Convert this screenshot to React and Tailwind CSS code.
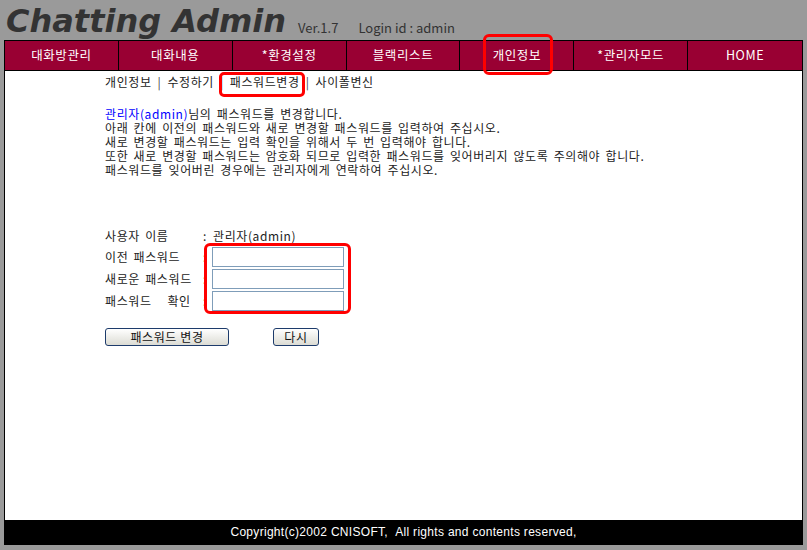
const MENU = ["대화방관리", "대화내용", "*환경설정", "블랙리스트", "개인정보", "*관리자모드", "HOME"];

const FIELDS = ["이전 패스워드", "새로운 패스워드", "패스워드   확인"];

function Button({ children, className }) {
  return (
    <button
      className={
        "h-[18px] rounded-[3px] border border-[#1d3b6b] bg-gradient-to-b from-white to-[#dcdcd4] text-[12px] leading-none tracking-[0.6px] text-[#111] " +
        className
      }
    >
      {children}
    </button>
  );
}

export default function App() {
  return (
    <div
      className="relative w-[807px] h-[550px] bg-[#9a9a9a] text-[12px] text-[#222]"
      style={{ fontFamily: '"Noto Sans CJK KR", "Noto Sans", sans-serif' }}
    >
      <div className="flex h-[40px] items-end pl-[6px]">
        <h1
          className="text-[32px] font-bold italic leading-none text-[#333] pb-[3px]"
          style={{ fontFamily: '"DejaVu Sans", Verdana, sans-serif' }}
        >
          Chatting Admin
        </h1>
        <span className="ml-[12px] pb-[3px] text-[13px] text-[#333]">Ver.1.7</span>
        <span className="ml-[20px] pb-[3px] text-[13px] text-[#333]">Login id : admin</span>
      </div>

      <div className="mx-[4px] flex h-[505px] flex-col border border-black bg-white">
        <nav className="grid h-[30px] grid-cols-7 border-b border-black bg-[#990033]">
          {MENU.map((m, i) => (
            <div
              key={m}
              className={
                "flex items-center justify-center text-[12.5px] tracking-[0.6px] text-white " +
                (i < MENU.length - 1 ? "border-r border-black" : "")
              }
            >
              {m}
            </div>
          ))}
        </nav>

        <div className="flex-1 pl-[100px] pt-[2px] tracking-[0.6px] [word-spacing:2px]">
          <div className="flex h-[18px] items-center">
            <span>개인정보</span>
            <span className="mx-[6px] text-[#444]">|</span>
            <span>수정하기</span>
            <span className="mx-[6px] text-[#444]">|</span>
            <span>패스워드변경</span>
            <span className="mx-[6px] text-[#444]">|</span>
            <span>사이폴변신</span>
          </div>

          <div className="mt-[16px] leading-[14px]">
            <p>
              <span className="text-[#0000ff]">관리자(admin)</span>님의 패스워드를 변경합니다.
            </p>
            <p>아래 칸에 이전의 패스워드와 새로 변경할 패스워드를 입력하여 주십시오.</p>
            <p>새로 변경할 패스워드는 입력 확인을 위해서 두 번 입력해야 합니다.</p>
            <p>또한 새로 변경할 패스워드는 암호화 되므로 입력한 패스워드를 잊어버리지 않도록 주의해야 합니다.</p>
            <p>패스워드를 잊어버린 경우에는 관리자에게 연락하여 주십시오.</p>
          </div>

          <div className="mt-[48px]">
            <div className="flex h-[21px] items-center">
              <span className="w-[98px] whitespace-pre">사용자 이름</span>
              <span className="w-[10px]">:</span>
              <span>관리자(admin)</span>
            </div>
            {FIELDS.map((f) => (
              <div key={f} className="flex h-[22px] items-center">
                <span className="w-[98px] whitespace-pre">{f}</span>
                <span className="w-[9px]">:</span>
                <input className="h-[20px] w-[132px] border border-[#7f9db9] bg-white outline-none" />
              </div>
            ))}
          </div>

          <div className="mt-[16px] flex">
            <Button className="w-[124px]">패스워드 변경</Button>
            <Button className="ml-[44px] w-[46px]">다시</Button>
          </div>
        </div>

        <footer
          className="flex h-[24px] items-center justify-center bg-black text-[12px] tracking-[0.3px] text-white"
          style={{ fontFamily: '"Liberation Sans", sans-serif' }}
        >
          Copyright(c)2002 CNISOFT,&nbsp;&nbsp;All rights and contents reserved,
        </footer>
      </div>

      {/* highlight marks */}
      <div className="absolute left-[483px] top-[34px] h-[41px] w-[70px] rounded-[6px] border-[3px] border-[#ff0000]" />
      <div className="absolute left-[219px] top-[72px] h-[25px] w-[86px] rounded-[5px] border-[3px] border-[#ff0000]" />
      <div className="absolute left-[204px] top-[243px] h-[71px] w-[147px] rounded-[6px] border-[3px] border-[#ff0000]" />
    </div>
  );
}
